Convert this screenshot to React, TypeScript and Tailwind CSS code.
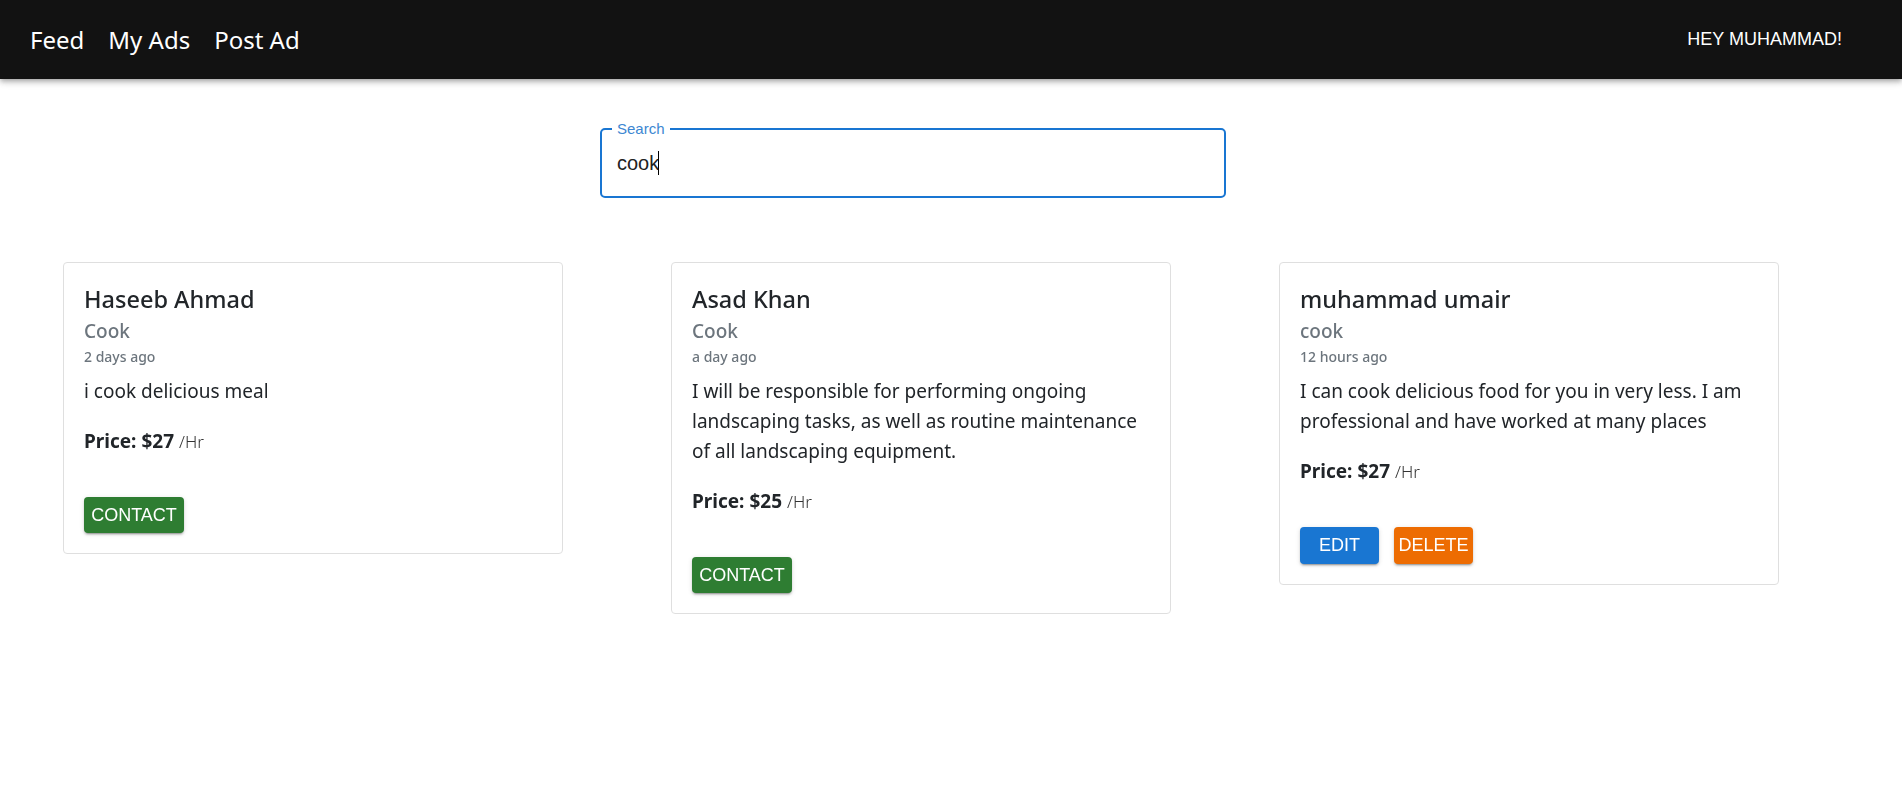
import { useState } from "react";

type Ad = {
  name: string;
  category: string;
  posted: string;
  description: string;
  price: number;
  mine: boolean;
};

const ads: Ad[] = [
  {
    name: "Haseeb Ahmad",
    category: "Cook",
    posted: "2 days ago",
    description: "i cook delicious meal",
    price: 27,
    mine: false,
  },
  {
    name: "Asad Khan",
    category: "Cook",
    posted: "a day ago",
    description:
      "I will be responsible for performing ongoing landscaping tasks, as well as routine maintenance of all landscaping equipment.",
    price: 25,
    mine: false,
  },
  {
    name: "muhammad umair",
    category: "cook",
    posted: "12 hours ago",
    description:
      "I can cook delicious food for you in very less. I am professional and have worked at many places",
    price: 27,
    mine: true,
  },
];

const uiFont = { fontFamily: '"Noto Sans", "Open Sans", sans-serif' };
const btnFont = { fontFamily: '"Liberation Sans", Arial, sans-serif' };

const raised =
  "shadow-[0_3px_1px_-2px_rgba(0,0,0,0.2),0_2px_2px_0_rgba(0,0,0,0.14),0_1px_5px_0_rgba(0,0,0,0.12)]";

function Navbar() {
  return (
    <header className="h-[79px] bg-[#121212] flex items-center justify-between pl-[30px] pr-[60px] shadow-[0_2px_4px_-1px_rgba(0,0,0,0.2),0_4px_5px_0_rgba(0,0,0,0.14),0_1px_10px_0_rgba(0,0,0,0.12)] relative z-10">
      <nav className="flex items-center gap-[24px] text-white text-[24px]" style={uiFont}>
        <a href="#">Feed</a>
        <a href="#">My Ads</a>
        <a href="#">Post Ad</a>
      </nav>
      <button className="text-white text-[18px] uppercase" style={btnFont}>
        Hey Muhammad!
      </button>
    </header>
  );
}

function SearchBox() {
  const [query, setQuery] = useState("cook");
  return (
    <div className="pl-[600px] mt-[41px]">
      <fieldset className="w-[626px] h-[78px] border-2 border-[#1976d2] rounded-[5px] px-[15px] flex items-center">
        <legend
          className="ml-[-5px] px-[5px] text-[15px] leading-[18px] text-[#3d87d2]"
          style={btnFont}
        >
          Search
        </legend>
        <div className="flex items-center mt-[-9px] text-[20px] text-[#222]" style={btnFont}>
          <input
            autoFocus
            value={query}
            onChange={(e) => setQuery(e.target.value)}
            size={query.length}
            className="outline-none w-[42px] caret-transparent"
          />
          <span className="w-px h-[24px] bg-black ml-[-1px]" />
        </div>
      </fieldset>
    </div>
  );
}

function AdCard({ ad }: { ad: Ad }) {
  return (
    <div
      className="w-[500px] bg-white border border-[#dfdfdf] rounded-[4px] p-[20px] text-[#212529]"
      style={uiFont}
    >
      <h4 className="text-[23.5px] leading-[32px] font-medium">{ad.name}</h4>
      <h5 className="text-[19px] leading-[26px] text-[#6c757d] font-medium mt-[3px]">{ad.category}</h5>
      <p className="text-[14px] leading-[20px] text-[#6c757d] font-medium mt-[3px]">{ad.posted}</p>
      <p className="text-[19px] leading-[30px] mt-[9px] mb-[20px]">{ad.description}</p>
      <p className="text-[19px] leading-[30px]">
        <span className="font-bold">Price: ${ad.price}</span>{" "}
        <span className="text-[17px] text-[#333] font-light">/Hr</span>
      </p>
      <div className="flex gap-[15px] mt-[40px]" style={btnFont}>
        {ad.mine ? (
          <>
            <button className={`w-[79px] h-[37px] rounded-[4px] bg-[#1976d2] text-white text-[18px] uppercase ${raised}`}>
              Edit
            </button>
            <button className={`w-[79px] h-[37px] rounded-[4px] bg-[#ed6c02] text-white text-[18px] uppercase ${raised}`}>
              Delete
            </button>
          </>
        ) : (
          <button className={`w-[100px] h-[36px] rounded-[4px] bg-[#2e7d32] text-white text-[18px] uppercase ${raised}`}>
            Contact
          </button>
        )}
      </div>
    </div>
  );
}

export default function App() {
  return (
    <div className="min-h-screen bg-white">
      <Navbar />
      <SearchBox />
      <main className="flex items-start gap-[108px] pl-[63px] mt-[64px]">
        {ads.map((ad) => (
          <AdCard key={ad.name} ad={ad} />
        ))}
      </main>
    </div>
  );
}
